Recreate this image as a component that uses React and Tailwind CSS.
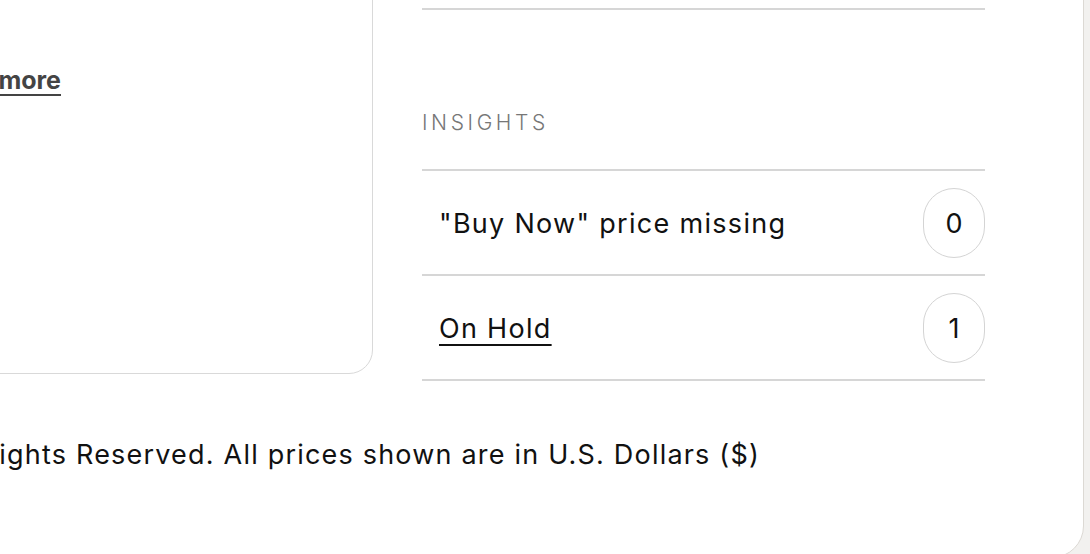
import React from 'react';

const insights = [
  { id: 'buy-now', label: '"Buy Now" price missing', count: 0, link: false },
  { id: 'on-hold', label: 'On Hold', count: 1, link: true },
];

function CountBadge({ value }) {
  return (
    <span className="flex h-[70px] w-[62px] shrink-0 items-center justify-center rounded-full border-[1.5px] border-[#d4d4d4] pt-[3px] text-[27px] text-[#111]">
      {value}
    </span>
  );
}

export default function App() {
  return (
    <div
      className="h-[554px] w-[1090px] overflow-hidden bg-[#f2f1ef]"
      style={{ fontFamily: 'Inter, "Open Sans", sans-serif' }}
    >
      <div className="-ml-[200px] -mt-[40px] h-[598px] w-[1284px] rounded-[32px] border-[1.5px] border-[#dcd9d4] bg-white pl-[48px] pr-[98px]">
        <div className="flex gap-[49px]">
          <div className="h-[413px] w-[524px] shrink-0 rounded-[24px] border-[1.5px] border-[#d9d9d9] pt-[102px]">
            <div className="w-[211px] text-right">
              <a href="#" className="whitespace-nowrap text-[25px] font-bold leading-[32px] text-[#444] underline decoration-2 underline-offset-[5px]">
                Learn more
              </a>
            </div>
          </div>

          <div className="w-[563px]">
            <div className="h-[49px] border-b-2 border-[#d6d6d6]" />
            <div className="h-[161px] border-b-2 border-[#d6d6d6] pt-[97px]">
              <h3 className="text-[21px] font-light uppercase leading-[32px] tracking-[3.6px] text-[#777]">Insights</h3>
            </div>
            {insights.map((item) => (
              <div
                key={item.id}
                className="flex h-[105px] items-center justify-between border-b-2 border-[#d6d6d6] pl-[17px]"
              >
                {item.link ? (
                  <a href="#" className="pt-[3px] text-[27px] tracking-[1.3px] text-[#111] underline decoration-2 underline-offset-[6px]">
                    {item.label}
                  </a>
                ) : (
                  <span className="pt-[3px] text-[27px] tracking-[1.3px] text-[#111]">{item.label}</span>
                )}
                <CountBadge value={item.count} />
              </div>
            ))}
          </div>
        </div>

        <div className="flex w-[911px] justify-end pt-[56px]">
          <p className="whitespace-nowrap text-[27px] leading-[36px] tracking-[1.2px] text-[#111]">
            Copyright © 1999 - 2024 GoDaddy Operating Company, LLC. All Rights Reserved. All prices shown are in U.S. Dollars ($)
          </p>
        </div>
      </div>
    </div>
  );
}
